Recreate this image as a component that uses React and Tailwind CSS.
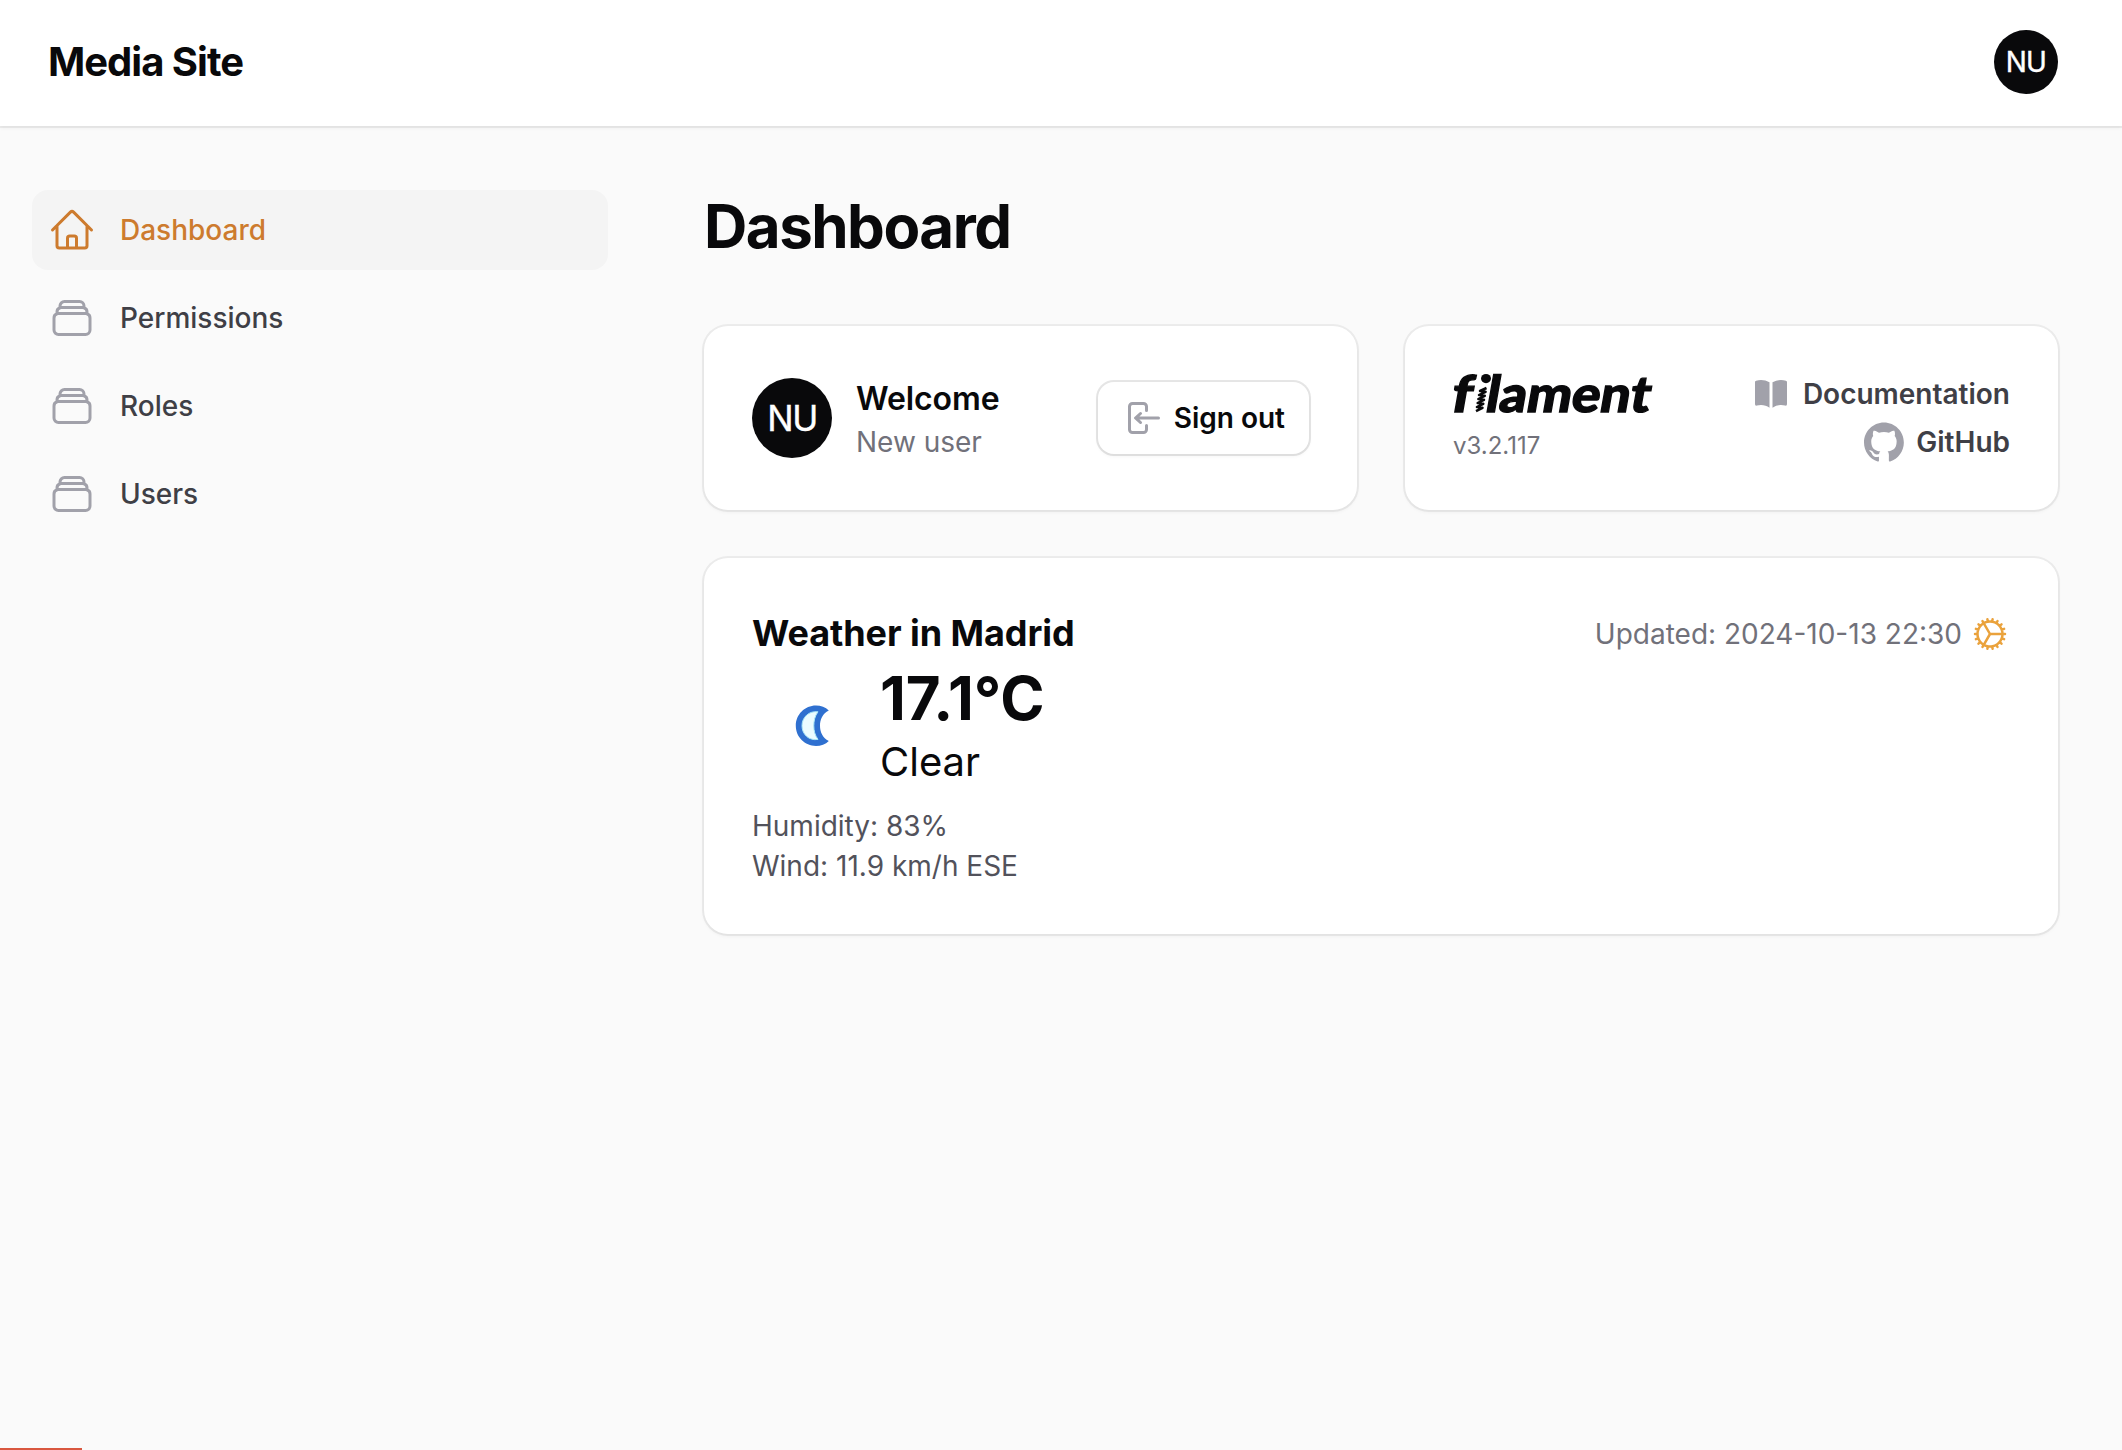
import React from "react";
import { HiOutlineHome, HiOutlineRectangleStack, HiMiniBookOpen, HiOutlineCog } from "react-icons/hi2";

const CARD =
  "rounded-[24px] bg-white shadow-[0_0_0_2px_rgba(9,9,11,0.06),0_2px_4px_rgba(0,0,0,0.05)]";

function NavItem({ label, icon: Icon, active }) {
  return (
    <a className={"flex h-20 items-center gap-6 rounded-2xl px-4 " + (active ? "bg-[#f4f4f4]" : "")}>
      <Icon className={"size-12 shrink-0 " + (active ? "text-[#cd7b2e]" : "text-[#a1a1aa]")} />
      <span className={"text-[28px] leading-10 font-medium " + (active ? "text-[#cd7b2e]" : "text-[#3f3f46]")}>
        {label}
      </span>
    </a>
  );
}

function SignOutIcon() {
  return (
    <svg viewBox="0 0 20 20" fill="currentColor" className="size-10 text-[#a1a1aa]">
      <path
        fillRule="evenodd"
        clipRule="evenodd"
        d="M3 4.25A2.25 2.25 0 0 1 5.25 2h5.5A2.25 2.25 0 0 1 13 4.25v2a.75.75 0 0 1-1.5 0v-2a.75.75 0 0 0-.75-.75h-5.5a.75.75 0 0 0-.75.75v11.5c0 .414.336.75.75.75h5.5a.75.75 0 0 0 .75-.75v-2a.75.75 0 0 1 1.5 0v2A2.25 2.25 0 0 1 10.75 18h-5.5A2.25 2.25 0 0 1 3 15.75V4.25Z"
      />
      <path
        fillRule="evenodd"
        clipRule="evenodd"
        d="M19 10a.75.75 0 0 0-.75-.75H8.704l1.048-.943a.75.75 0 1 0-1.004-1.114l-2.5 2.25a.75.75 0 0 0 0 1.114l2.5 2.25a.75.75 0 1 0 1.004-1.114l-1.048-.943h9.546A.75.75 0 0 0 19 10Z"
      />
    </svg>
  );
}

function GitHubIcon() {
  return (
    <svg viewBox="0 0 98 96" fill="currentColor" className="size-10 text-[#a1a1aa]">
      <path
        fillRule="evenodd"
        clipRule="evenodd"
        d="M48.854 0C21.839 0 0 22 0 49.217c0 21.756 13.993 40.172 33.405 46.69 2.427.49 3.316-1.059 3.316-2.362 0-1.141-.08-5.052-.08-9.127-13.59 2.934-16.42-5.867-16.42-5.867-2.184-5.704-5.42-7.17-5.42-7.17-4.448-3.015.324-3.015.324-3.015 4.934.326 7.523 5.052 7.523 5.052 4.367 7.496 11.404 5.378 14.235 4.074.404-3.178 1.699-5.378 3.074-6.6-10.839-1.141-22.243-5.378-22.243-24.283 0-5.378 1.94-9.778 5.014-13.2-.485-1.222-2.184-6.275.486-13.038 0 0 4.125-1.304 13.426 5.052a46.97 46.97 0 0 1 12.214-1.63c4.125 0 8.33.571 12.213 1.63 9.302-6.356 13.427-5.052 13.427-5.052 2.67 6.763.97 11.816.485 13.038 3.155 3.422 5.015 7.822 5.015 13.2 0 18.905-11.404 23.06-22.324 24.283 1.78 1.548 3.316 4.481 3.316 9.126 0 6.6-.08 11.897-.08 13.526 0 1.304.89 2.853 3.316 2.364 19.412-6.52 33.405-24.935 33.405-46.691C97.707 22 75.788 0 48.854 0z"
      />
    </svg>
  );
}

function FilamentLogo() {
  return (
    <svg viewBox="0 0 200 40" className="h-10 w-[200px] overflow-visible text-[#09090b]">
      <g
        transform="translate(0 37.8) skewX(-10)"
        fill="currentColor"
        stroke="currentColor"
        strokeWidth="1.3"
        fontFamily="Lato"
        fontWeight="900"
        fontSize="50.5"
      >
        <text x="-3.5" y="0" textLength="20.5" lengthAdjust="spacingAndGlyphs">f</text>
        <text x="31" y="0" textLength="164" lengthAdjust="spacingAndGlyphs">lament</text>
      </g>
      <ellipse cx="33" cy="4.6" rx="5" ry="4.6" fill="currentColor" />
      <path
        d="M33.5 14L27 17L32.6 17.8L26 21L31.8 21.8L25.3 25L31 25.8L24.6 29L30.3 29.8L23.9 33L29.5 33.8L23 37.2"
        fill="none"
        stroke="currentColor"
        strokeWidth="2.5"
        strokeLinejoin="round"
      />
    </svg>
  );
}

function MoonIcon() {
  return (
    <svg viewBox="0 0 64 64" className="size-32">
      <path
        d="M38.4 24.2C36.8 22.6 34.4 21.8 32 21.8C26.4 21.8 21.9 26.3 21.9 31.9S26.4 42 32 42C34.4 42 36.8 41.2 38.4 39.5C35.3 38 34 35 34 31.9S35.3 25.7 38.4 24.2Z"
        fill="#2f70d0"
      />
      <path
        d="M33 24.9C28.5 24.3 25 27.6 25 31.9S28.5 39.5 33 38.7C31.4 36.6 30.9 34.3 30.9 31.9S31.4 27 33 24.9Z"
        fill="#ecfcff"
        stroke="#a9e6f7"
        strokeWidth="0.5"
      />
    </svg>
  );
}

export default function App() {
  return (
    <div className="flex h-[1450px] w-[2122px] flex-col overflow-hidden bg-[#fafafa] font-['Inter',sans-serif] text-[#09090b]">
      <header className="z-10 flex h-[126px] shrink-0 items-center justify-between bg-white pr-16 pb-0.5 pl-12 shadow-[0_0_0_2px_rgba(9,9,11,0.06),0_2px_4px_rgba(0,0,0,0.05)]">
        <div className="text-[40px] leading-10 font-bold tracking-tight">Media Site</div>
        <div className="flex size-16 items-center justify-center rounded-full bg-[#09090b] text-[28px] tracking-[-0.03em] text-white [-webkit-text-stroke:0.4px_white]">
          NU
        </div>
      </header>

      <div className="flex min-h-0 flex-1">
        <aside className="w-[640px] shrink-0 px-8 pt-16">
          <nav className="flex flex-col gap-2">
            <NavItem label="Dashboard" icon={HiOutlineHome} active />
            <NavItem label="Permissions" icon={HiOutlineRectangleStack} />
            <NavItem label="Roles" icon={HiOutlineRectangleStack} />
            <NavItem label="Users" icon={HiOutlineRectangleStack} />
          </nav>
        </aside>

        <main className="flex min-w-0 flex-1 flex-col px-16 pt-16">
          <h1 className="text-[60px] leading-[72px] font-bold tracking-tight">Dashboard</h1>

          <div className="mt-16 grid grid-cols-2 gap-12">
            <section className={CARD + " flex h-[184px] items-center gap-6 px-12"}>
              <div className="flex size-20 items-center justify-center rounded-full bg-[#09090b] text-[35px] tracking-[-0.04em] text-white [-webkit-text-stroke:0.4px_white]">
                NU
              </div>
              <div className="flex-1">
                <h2 className="h-12 pt-px text-[32px] leading-12 font-semibold tracking-[-0.003em]">Welcome</h2>
                <p className="text-[28px] leading-10 text-[#71717a]">New user</p>
              </div>
              <button className="flex h-[72px] items-center gap-3 rounded-2xl bg-white px-6 text-[28px] font-semibold shadow-[0_0_0_2px_rgba(9,9,11,0.1),0_2px_4px_rgba(0,0,0,0.05)]">
                <SignOutIcon />
                Sign out
              </button>
            </section>

            <section className={CARD + " flex h-[184px] items-center justify-between px-12"}>
              <div>
                <FilamentLogo />
                <p className="mt-4 text-2xl text-[#71717a]">v3.2.117</p>
              </div>
              <div className="flex flex-col items-end gap-2 text-[28px] leading-10 font-semibold text-[#3f3f46]">
                <a className="flex items-center gap-3">
                  <HiMiniBookOpen className="size-10 text-[#a1a1aa]" />
                  Documentation
                </a>
                <a className="flex items-center gap-3">
                  <GitHubIcon />
                  GitHub
                </a>
              </div>
            </section>

            <section className={CARD + " col-span-2 h-[376px] p-12"}>
              <div className="flex h-14 items-center justify-between">
                <h2 className="pb-0.5 text-[36px] leading-[54px] font-bold tracking-[-0.002em]">Weather in Madrid</h2>
                <div className="flex items-center gap-2 text-[28px] leading-10 text-[#71717a]">
                  Updated: 2024-10-13 22:30
                  <HiOutlineCog className="size-10 text-[#eaa23c]" />
                </div>
              </div>
              <div className="flex items-center">
                <MoonIcon />
                <div>
                  <p className="text-[60px] leading-[72px] font-bold">17.1°C</p>
                  <p className="text-[40px] leading-14">Clear</p>
                </div>
              </div>
              <div className="mt-4 text-[28px] leading-10 text-[#52525b]">
                <p>Humidity: 83%</p>
                <p>Wind: 11.9 km/h ESE</p>
              </div>
            </section>
          </div>
        </main>
      </div>

      <div className="h-0.5 w-[82px] shrink-0 bg-[#d9573f]" />
    </div>
  );
}
